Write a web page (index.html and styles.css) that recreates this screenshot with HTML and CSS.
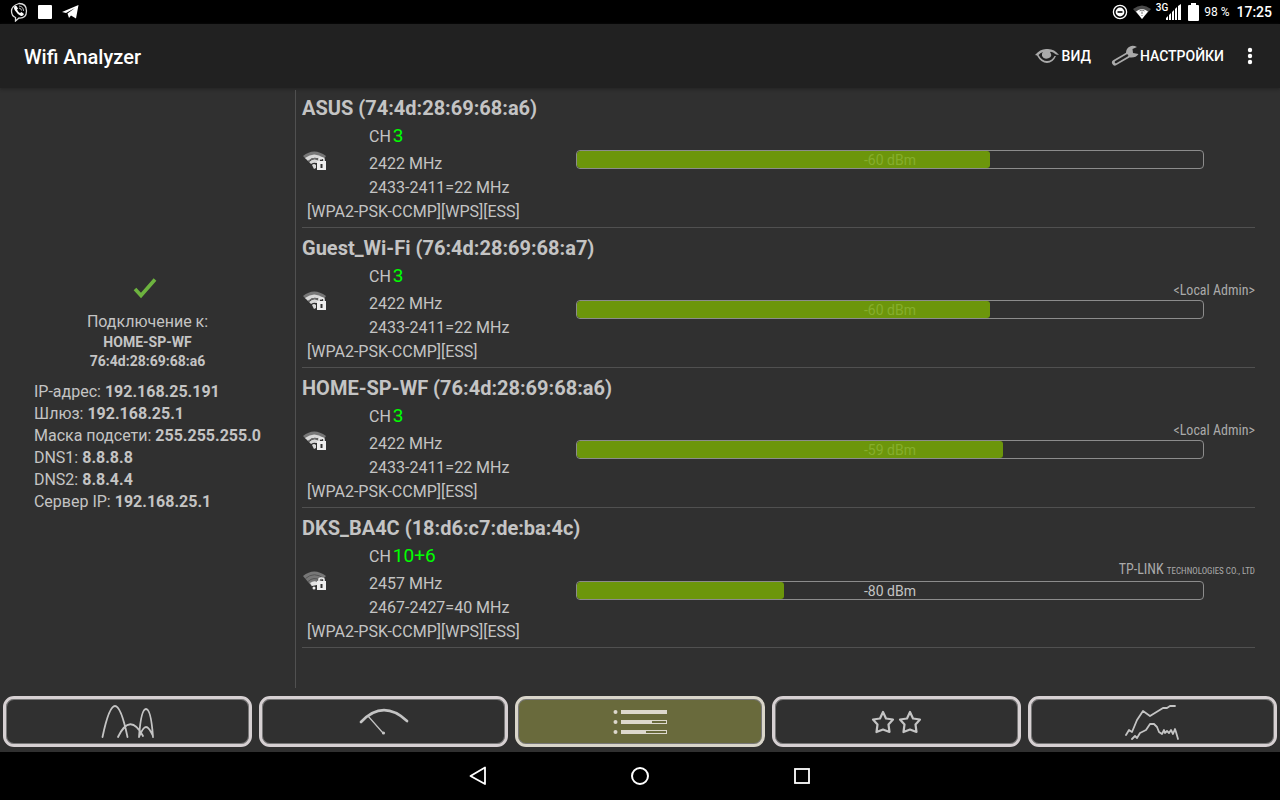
FILE: index.html
```html
<!DOCTYPE html>
<html lang="ru">
<head>
<meta charset="utf-8">
<meta name="viewport" content="width=device-width, initial-scale=1">
<title>Wifi Analyzer</title>
<link rel="stylesheet" href="styles.css">
</head>
<body>
<svg class="sprite" aria-hidden="true">
  <symbol id="wifi-strong" viewBox="0 0 24 20">
    <path fill="#777" d="M0 6Q11-3 23 6L21 9Q11 2 3 9z"/>
    <path fill="#d8d8d8" d="M2 8Q11 1 21 8L18 10Q11 5 5 11zM6 12Q11 7 16 11V13H13Q11 12 8 14zM9 15Q11 13 13 15L13 18L11 19z"/>
    <path fill="none" stroke="#777" d="M5 11.500Q11 6 17 10.500"/>
    <path fill="#eee" d="M14 11H23V20H14z"/>
    <path fill="none" stroke="#eee" stroke-width="1.600" d="M16 12V9.500Q16 8 18.500 8T21 9.500V12"/>
    <path fill="#333" d="M17.500 14H19.500V18H17.500z"/>
  </symbol>
  <symbol id="wifi-weak" viewBox="0 0 24 20">
    <path fill="#777" d="M0 6Q11-3 23 6L18 11L11 19z"/>
    <path fill="none" stroke="#4b4b4b" stroke-width=".8" d="M2.500 8.500Q11 1 21 8.500M5 11.500Q11 6 17 10.500"/>
    <path fill="#e4e4e4" d="M7 13Q11 10 14 12V15L11 19z"/>
    <path fill="#303030" d="M9 16L14 15V18L9 19z"/>
    <circle cx="11" cy="18" r="1.500" fill="#eee"/>
    <path fill="#eee" d="M14 11H23V20H14z"/>
    <path fill="none" stroke="#eee" stroke-width="1.600" d="M16 12V9.500Q16 8 18.500 8T21 9.500V12"/>
    <path fill="#333" d="M17.500 14H19.500V18H17.500z"/>
  </symbol>
  <symbol id="star" viewBox="0 0 24 24">
    <path fill="none" stroke="#c4c4c4" stroke-width="2.200" stroke-linejoin="round" d="M12 2L15 8.500L22 9.500L17.500 14.500L18.500 22L12 19.500L5.500 22L6.500 14.500L2 9.500L9 8.500z"/>
  </symbol>
</svg>

<div class="status">
  <div class="status-left">
    <svg width="18" height="20" viewBox="0 0 18 20"><path fill="none" stroke="#ddd" stroke-width="1.300" d="M9 1.500Q16.500 1.500 16.500 9T9 16L5.500 19V15.500Q1.500 14 1.500 9T9 1.500z"/><path fill="#fff" d="M5 4Q3 5.500 5 8.500Q7.500 12.500 11 14Q13 14.500 14 12L11.500 10L10 11Q8 10 7 7.500L8 6.500L6.500 4z"/><path fill="none" stroke="#bbb" d="M9 4Q13.500 4.500 13.500 9M9 6Q11.500 6.500 11.500 8.500"/></svg>
    <svg width="14" height="14" viewBox="0 0 14 14"><rect width="14" height="14" rx="1" fill="#fff"/></svg>
    <svg width="17" height="14" viewBox="0 0 17 14"><path fill="#fff" d="M0 7L16.500 0L14 13.500L9 10.500L7 13L5.500 8.500L13 3L4 8z"/></svg>
  </div>
  <div class="status-right">
    <svg width="16" height="16" viewBox="0 0 16 16"><circle cx="8" cy="8" r="6.600" fill="none" stroke="#fff" stroke-width="1.300"/><circle cx="8" cy="8" r="4.400" fill="#fff"/><path stroke="#000" stroke-width="1.600" d="M5.500 8H10.500"/></svg>
    <svg width="18" height="14" viewBox="0 0 18 14"><path fill="#4a4a4a" d="M0 4Q9-3 18 4L9 14z"/><path fill="#fff" d="M3 6.500Q9 1.500 15 6.500L9 14z"/><path fill="none" stroke="#777" d="M6.500 6Q9 4 11.500 6M9 6.500V9M9 10V11"/></svg>
    <div class="mobile">
      <span class="mobile-type">3G</span>
      <svg width="15" height="16" viewBox="0 0 15 16"><path fill="#fff" d="M0 16V14L2 12V16zM3 16V11L5 9V16zM6 16V8L8 6V16zM9 16V5L11 3V16zM12 16V2L15 0V16z"/></svg>
    </div>
    <svg width="11" height="18" viewBox="0 0 11 18"><path fill="#fff" d="M3 0H8V2H10Q11 2 11 3V17Q11 18 10 18H1Q0 18 0 17V3Q0 2 1 2H3z"/></svg>
    <span class="battery">98 %</span>
    <time class="clock">17:25</time>
  </div>
</div>

<header class="toolbar">
  <h1>Wifi Analyzer</h1>
  <div class="actions">
    <button type="button" class="action">
      <svg width="24" height="16" viewBox="0 0 24 16"><path fill="#aaa" d="M0 7Q5 1 11 1Q19 0 24 7L21 6.500Q17 3 15 4Q18 8 14 10Q9 12 7 8Q6.500 5 8 4Q5 5 3.500 7Q7 13 12 13Q17 13 19.500 8L21 8Q18 15 12 15Q6 15 2 7.500z"/><path fill="#aaa" d="M11 4Q9 6 11 8T14 7Q11 8 12 5z"/></svg>
      ВИД
    </button>
    <button type="button" class="action">
      <svg width="28" height="22" viewBox="0 0 28 22"><path fill="none" stroke="#aaa" stroke-width="6" stroke-linecap="round" d="M4 17.500L17 10"/><path fill="#aaa" d="M15 8Q15 3 19 1.500Q22 0 26 2L21.500 4L22 8L27.500 9Q25 13 19 12.500z"/><path stroke="#212121" stroke-width="2.600" stroke-linecap="round" d="M5 17L16 10.500"/></svg>
      НАСТРОЙКИ
    </button>
    <button type="button" class="more" aria-label="Ещё">
      <svg width="6" height="18" viewBox="0 0 6 18" fill="#fff"><circle cx="3" cy="3" r="2.200"/><circle cx="3" cy="9" r="2.200"/><circle cx="3" cy="15" r="2.200"/></svg>
    </button>
  </div>
</header>

<main class="content">
  <aside class="connection">
    <svg class="check" width="24" height="22" viewBox="0 0 24 22"><path fill="none" stroke="#6db33f" stroke-width="3.600" d="M2 12L8 18.500L22 2.500"/></svg>
    <p class="label">Подключение к:</p>
    <p class="network">HOME-SP-WF</p>
    <p class="network">76:4d:28:69:68:a6</p>
    <ul class="details">
      <li>IP-адрес: <b>192.168.25.191</b></li>
      <li>Шлюз: <b>192.168.25.1</b></li>
      <li>Маска подсети: <b>255.255.255.0</b></li>
      <li>DNS1: <b>8.8.8.8</b></li>
      <li>DNS2: <b>8.8.4.4</b></li>
      <li>Сервер IP: <b>192.168.25.1</b></li>
    </ul>
  </aside>

  <section class="points">
    <article class="point">
      <h2>ASUS (74:4d:28:69:68:a6)</h2>
      <div class="body">
        <svg class="wifi" width="24" height="20"><use href="#wifi-strong"/></svg>
        <div class="radio">
          <p class="channel">CH<span>3</span></p>
          <p>2422 MHz</p>
          <p>2433-2411=22 MHz</p>
        </div>
        <div class="signal">
          <div class="bar"><div class="fill" style="width:66%"></div><span class="level covered">-60 dBm</span></div>
        </div>
      </div>
      <p class="security">[WPA2-PSK-CCMP][WPS][ESS]</p>
    </article>
    <article class="point">
      <h2>Guest_Wi-Fi (76:4d:28:69:68:a7)</h2>
      <div class="body">
        <svg class="wifi" width="24" height="20"><use href="#wifi-strong"/></svg>
        <div class="radio">
          <p class="channel">CH<span>3</span></p>
          <p>2422 MHz</p>
          <p>2433-2411=22 MHz</p>
        </div>
        <div class="signal">
          <p class="vendor">&lt;Local Admin&gt;</p>
          <div class="bar"><div class="fill" style="width:66%"></div><span class="level covered">-60 dBm</span></div>
        </div>
      </div>
      <p class="security">[WPA2-PSK-CCMP][ESS]</p>
    </article>
    <article class="point">
      <h2>HOME-SP-WF (76:4d:28:69:68:a6)</h2>
      <div class="body">
        <svg class="wifi" width="24" height="20"><use href="#wifi-strong"/></svg>
        <div class="radio">
          <p class="channel">CH<span>3</span></p>
          <p>2422 MHz</p>
          <p>2433-2411=22 MHz</p>
        </div>
        <div class="signal">
          <p class="vendor">&lt;Local Admin&gt;</p>
          <div class="bar"><div class="fill" style="width:68%"></div><span class="level covered">-59 dBm</span></div>
        </div>
      </div>
      <p class="security">[WPA2-PSK-CCMP][ESS]</p>
    </article>
    <article class="point">
      <h2>DKS_BA4C (18:d6:c7:de:ba:4c)</h2>
      <div class="body">
        <svg class="wifi" width="24" height="20"><use href="#wifi-weak"/></svg>
        <div class="radio">
          <p class="channel">CH<span>10+6</span></p>
          <p>2457 MHz</p>
          <p>2467-2427=40 MHz</p>
        </div>
        <div class="signal">
          <p class="vendor">TP-LINK <small>TECHNOLOGIES CO., LTD</small></p>
          <div class="bar"><div class="fill" style="width:33%"></div><span class="level">-80 dBm</span></div>
        </div>
      </div>
      <p class="security">[WPA2-PSK-CCMP][WPS][ESS]</p>
    </article>
  </section>
</main>

<nav class="tabs" aria-label="Режимы">
  <button type="button" class="tab" aria-label="График каналов">
    <svg width="54" height="36" viewBox="0 0 54 36" fill="none" stroke="#c4c4c4" stroke-width="1.800" stroke-linecap="round"><path d="M1.500 33Q8 2 14 2T26.500 33M17 33Q29 8 42 32M38 33Q40 5 45 5T52 33M38 33Q42 23 45 23T52 32"/></svg>
  </button>
  <button type="button" class="tab" aria-label="Измеритель сигнала">
    <svg width="50" height="28" viewBox="0 0 50 28" fill="none" stroke="#c4c4c4" stroke-linecap="round"><path stroke-width="2.600" d="M2 14Q24-9 48 13"/><path stroke-width="1.200" d="M9 8L24 25"/><circle cx="24.500" cy="25" r="1.600" fill="#c4c4c4" stroke="none"/></svg>
  </button>
  <button type="button" class="tab active" aria-label="Список точек" aria-pressed="true">
    <svg width="54" height="26" viewBox="0 0 54 26" fill="#ddd8cd"><circle cx="2.500" cy="3" r="2"/><circle cx="2.500" cy="13" r="2"/><circle cx="2.500" cy="23" r="2"/><rect x="8" y="1" width="46" height="4"/><path fill-rule="evenodd" d="M8 11H54V15H8zM39 12V14H53V12zM8 21H54V25H8zM33 22V24H53V22z"/></svg>
  </button>
  <button type="button" class="tab" aria-label="Оценка каналов">
    <svg width="51" height="26" viewBox="0 0 51 26"><use href="#star" width="24" height="26"/><use href="#star" x="27" width="24" height="26"/></svg>
  </button>
  <button type="button" class="tab" aria-label="График по времени">
    <svg width="54" height="36" viewBox="0 0 54 36" fill="none" stroke="#c4c4c4" stroke-width="1.800" stroke-linecap="round" stroke-linejoin="round"><path d="M1 31L4 26L7 28L12 16L18 7L25 12L38 4L42 4L45 2L50 2"/><path d="M7 35L10 32L12 34L15 29L21 26L25 20L29 20L32 23L34 28L37 30L39 26L40 29L42 27L44 29L46 26L48 30L50 25L51 28L53 35"/></svg>
  </button>
</nav>

<nav class="system" aria-label="Система">
  <button type="button" aria-label="Назад"><svg width="18" height="20" viewBox="0 0 18 20"><path fill="none" stroke="#fff" stroke-width="1.800" stroke-linejoin="round" d="M16 1.500V18L1.500 10z"/></svg></button>
  <button type="button" aria-label="Домой"><svg width="20" height="20" viewBox="0 0 20 20"><circle cx="10" cy="10" r="8" fill="none" stroke="#fff" stroke-width="2"/></svg></button>
  <button type="button" aria-label="Недавние"><svg width="18" height="18" viewBox="0 0 18 18"><rect x="2" y="2" width="14" height="14" fill="none" stroke="#fff" stroke-width="1.800"/></svg></button>
</nav>
</body>
</html>
```
FILE: styles.css
```css
* {
  box-sizing: border-box;
}

body {
  display: flex;
  flex-direction: column;
  min-height: 100vh;
  margin: 0;
  background: #303030;
  color: #c4c4c4;
  font-family: Roboto, "Noto Sans", sans-serif;
  font-size: 16px;
  line-height: 24px;
}

h1, h2, p, ul {
  margin: 0;
  padding: 0;
}

button {
  display: flex;
  align-items: center;
  justify-content: center;
  padding: 0;
  border: 0;
  background: none;
  color: #fff;
  font: inherit;
  cursor: pointer;
}

svg {
  display: block;
  flex: none;
}

.sprite {
  position: absolute;
  width: 0;
  height: 0;
}

.status {
  display: flex;
  align-items: center;
  justify-content: space-between;
  height: 24px;
  padding: 0 8px 0 10px;
  background: #000;
  color: #fff;
}

.status-left {
  display: flex;
  align-items: center;
  gap: 10px;
}

.status-right {
  display: flex;
  align-items: center;
  gap: 5px;
}

.mobile {
  display: flex;
  align-items: flex-end;
  margin-right: 2px;
}

.mobile-type {
  align-self: flex-start;
  margin-right: -2px;
  font-size: 10px;
  font-weight: 500;
  line-height: 8px;
}

.battery {
  margin-right: 2px;
  font-size: 12px;
}

.clock {
  font-size: 14px;
  font-weight: 500;
}

.toolbar {
  display: flex;
  align-items: center;
  justify-content: space-between;
  height: 64px;
  padding: 0 24px;
  background: #212121;
  box-shadow: 0 1px 3px #222;
  color: #fff;
}

.toolbar h1 {
  padding-top: 2px;
  font-size: 20px;
  font-weight: 500;
}

.actions {
  display: flex;
  align-items: center;
  gap: 20px;
}

.action {
  gap: 3px;
  font-size: 14px;
  font-weight: 500;
}

.action + .action {
  gap: 1px;
}

.more {
  width: 12px;
  height: 40px;
}

.content {
  display: flex;
  flex: 1;
  padding-top: 2px;
}

.connection {
  display: flex;
  flex: 0 0 296px;
  flex-direction: column;
  align-items: center;
  justify-content: center;
  padding-top: 12px;
  border-right: 1px solid #505050;
}

.check {
  margin-bottom: 12px;
  margin-right: 6px;
}

.label {
  line-height: 22px;
}

.network {
  font-size: 14px;
  font-weight: 700;
  line-height: 19px;
}

.details {
  margin-top: 10px;
  list-style: none;
  line-height: 22px;
}

.points {
  flex: 1;
  padding: 0 25px 0 6px;
}

.point {
  height: 140px;
  border-bottom: 1px solid #505050;
}

.point:first-child {
  height: 138px;
}

.point:not(:first-child) {
  padding-top: 2px;
}

.point h2 {
  height: 31px;
  font-size: 20px;
  font-weight: 700;
  line-height: 36px;
}

.body {
  display: flex;
  align-items: center;
  height: 78px;
}

.wifi {
  margin: 0 42px 0 1px;
}

.radio {
  width: 207px;
  white-space: nowrap;
}

.channel {
  line-height: 30px;
}

.channel span {
  margin-left: 2px;
  color: #0f0;
  font-size: 19px;
}

.signal {
  flex: 1;
  padding-bottom: 2px;
}

.vendor {
  color: #aaa;
  font-family: "Roboto Condensed", Roboto, sans-serif;
  font-size: 14px;
  line-height: 20px;
  text-align: right;
}

.vendor small {
  font-size: 9px;
}

.bar {
  display: flex;
  position: relative;
  height: 19px;
  margin-right: 51px;
  overflow: hidden;
  border: 1px solid #8c8c8c;
  border-radius: 4px;
}

.fill {
  border-radius: 3px;
  background: #6c960b;
}

.level {
  position: absolute;
  inset: 0;
  color: #c4c4c4;
  font-size: 14px;
  line-height: 19px;
  text-align: center;
}

.covered {
  color: #86ae2c;
}

.security {
  margin-top: 1px;
  padding-left: 5px;
}

.tabs {
  display: flex;
  gap: 7px;
  height: 64px;
  padding: 8px 3px 5px;
}

.tab {
  flex: 1;
  border: 3px solid #d6d0d2;
  border-radius: 11px;
  box-shadow: inset 0 0 0 1px #777;
}

.active {
  border-color: #d9d5ca;
  background: #696a3c;
}

.system {
  display: flex;
  align-items: center;
  justify-content: center;
  gap: 114px;
  height: 48px;
  background: #000;
}

.system button {
  width: 48px;
  height: 48px;
}
```
